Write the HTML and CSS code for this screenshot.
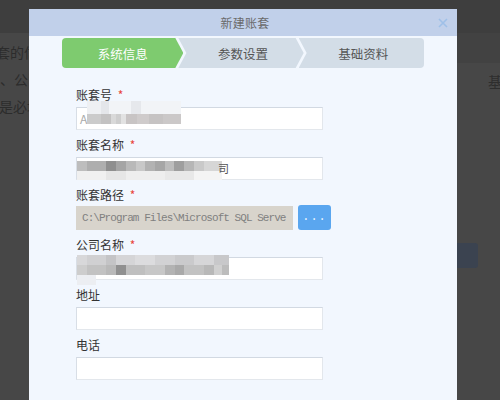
FILE: index.html
```html
<!DOCTYPE html>
<html>
<head>
<meta charset="utf-8">
<link rel="stylesheet" href="styles.css">
</head>
<body>
<div class="page">
  <div class="topbar"></div>
  <div class="main">
    <div class="left-text">
      <p class="l1">套的信息</p>
      <p class="l2">、公司</p>
      <p class="l3">是必填</p>
    </div>
    <div class="spacer"></div>
    <div class="right-col">
      <div class="band"></div>
      <div class="row-text">基础</div>
      <div class="bg-btn"></div>
    </div>
  </div>
</div>

<div class="dialog">
  <div class="dialog-header">
    <span></span>
    <span class="title">新建账套</span>
    <span class="close"><svg width="10" height="10" viewBox="0 0 10 10"><path d="M1 1 L9 9 M9 1 L1 9" stroke="#9fc0e8" stroke-width="1.6" fill="none"/></svg></span>
  </div>
  <div class="steps">
    <div class="step step-first active">系统信息</div>
    <div class="step step-mid">参数设置</div>
    <div class="step step-last">基础资料</div>
  </div>
  <div class="form">
    <div class="field">
      <div class="label">账套号 <span class="req">*</span></div>
      <div class="input"><span class="val">AI</span><span class="mosaic mosaic-a"></span></div>
    </div>
    <div class="field">
      <div class="label">账套名称 <span class="req">*</span></div>
      <div class="input"><span class="mosaic mosaic-b"></span><span class="tail">司</span></div>
    </div>
    <div class="field field-path">
      <div class="label">账套路径 <span class="req">*</span></div>
      <div class="path-row">
        <div class="input input-path">C:\Program Files\Microsoft SQL Serve</div>
        <button class="browse">...</button>
      </div>
    </div>
    <div class="field">
      <div class="label">公司名称 <span class="req">*</span></div>
      <div class="input"><span class="mosaic mosaic-c"></span></div>
    </div>
    <div class="field">
      <div class="label">地址</div>
      <div class="input"></div>
    </div>
    <div class="field">
      <div class="label">电话</div>
      <div class="input"></div>
    </div>
  </div>
</div>
</body>
</html>
```

FILE: styles.css
```css
* { box-sizing: border-box; }
html, body {
  margin: 0;
  padding: 0;
}
body {
  width: 500px;
  height: 400px;
  overflow: hidden;
  background: #474747;
  font-family: "Noto Sans CJK SC", "Noto Sans", sans-serif;
  position: relative;
}

/* background page (dimmed) */
.page {
  width: 500px;
  height: 400px;
  display: flex;
  flex-direction: column;
}
.topbar {
  height: 33px;
  background: #3e3e3e;
  flex: none;
}
.main {
  flex: 1;
  display: flex;
}
.left-text {
  width: 29px;
  overflow: hidden;
  padding-top: 6px;
  color: #2c2c2c;
  font-size: 14px;
  line-height: 27px;
  white-space: nowrap;
}
.left-text p { margin: 0; }
.left-text .l1 { margin-left: -4px; }
.left-text .l2 { margin-left: 0; }
.left-text .l3 { margin-left: -1px; }
.spacer { flex: 1; }
.right-col {
  width: 43px;
  display: flex;
  flex-direction: column;
}
.band {
  height: 30px;
  background: #424242;
}
.row-text {
  margin-top: 9px;
  padding-left: 31px;
  font-size: 14px;
  line-height: 18px;
  color: #2e2e2e;
  white-space: nowrap;
  overflow: hidden;
}
.bg-btn {
  margin-top: 153px;
  width: 21px;
  height: 25px;
  background: #3b4350;
  border-radius: 0 3px 3px 0;
}

/* dialog */
.dialog {
  position: absolute;
  left: 29px;
  top: 9px;
  width: 428px;
  height: 400px;
  background: #f2f7fe;
}
.dialog-header {
  height: 27px;
  background: #c1d0ea;
  display: grid;
  grid-template-columns: 1fr auto 1fr;
  align-items: center;
  color: #6a6a6a;
  font-size: 12px;
}
.title { padding-left: 4px; letter-spacing: 0.3px; }
.close {
  justify-self: end;
  padding-right: 9px;
  display: flex;
  align-items: center;
}

.steps {
  margin: 2px 33px 0 33px;
  height: 30px;
  display: flex;
}
.step {
  flex: 1;
  display: flex;
  align-items: center;
  justify-content: center;
  font-size: 12.5px;
  color: #555;
  background: #d3dde7;
}
.step-first {
  border-radius: 4px 0 0 4px;
  clip-path: polygon(0 0, calc(100% - 8px) 0, 100% 50%, calc(100% - 8px) 100%, 0 100%);
}
.step-mid {
  margin-left: -5px;
  padding-left: 4px;
  clip-path: polygon(0 0, calc(100% - 8px) 0, 100% 50%, calc(100% - 8px) 100%, 0 100%, 8px 50%);
}
.step-last {
  margin-left: -5px;
  padding-left: 4px;
  border-radius: 0 4px 4px 0;
  clip-path: polygon(0 0, 100% 0, 100% 100%, 0 100%, 8px 50%);
}
.step.active {
  background: #7ecb6f;
  color: #fff;
}

.form {
  padding: 19px 0 0 47px;
  display: flex;
  flex-direction: column;
  gap: 7px;
}
.field {
  display: flex;
  flex-direction: column;
  gap: 4px;
}
.field-path { gap: 2px; }
.label {
  font-size: 12px;
  line-height: 16px;
  color: #333;
}
.req {
  color: #e8443a;
  margin-left: 3px;
}
.input {
  position: relative;
  width: 247px;
  height: 23px;
  background: #fff;
  border: 1px solid #e3e7ec;
  border-top-color: #d2d9e2;
  border-left-color: #d8dee6;
  font-size: 12px;
  display: flex;
  align-items: center;
}
.val {
  padding-left: 3px;
  color: #aaa;
}
.tail {
  position: absolute;
  left: 141px;
  top: 2px;
  color: #555;
  font-size: 11px;
}
.path-row {
  display: flex;
  gap: 5px;
  align-items: center;
  height: 25px;
}
.input-path {
  width: 217px;
  height: 24px;
  background: #d8d4cc;
  border: none;
  padding-left: 6px;
  color: #808080;
  font-family: "Liberation Mono", monospace;
  font-size: 11px;
  letter-spacing: -0.95px;
  white-space: nowrap;
  overflow: hidden;
}
.browse {
  width: 33px;
  height: 25px;
  border: none;
  border-radius: 3px;
  background: #5aa6ef;
  color: #e8f2fd;
  font-size: 12px;
  letter-spacing: 1px;
  padding: 0 0 2px 0;
  font-family: "Liberation Mono", monospace;
}

/* pixelated (blurred) content */
.mosaic {
  position: absolute;
  display: block;
}
.mosaic-a {
  left: 10px;
  top: -7px;
  width: 94px;
  height: 23px;
  background:
    linear-gradient(to right, #cbcbcb 0 14px, #c3c2c2 14px 24px, #d9d9d9 24px 29px, #cecece 29px 34px, #e2e2e2 34px 39px, #c8c4c4 39px 50px, #cfcbcb 50px 62px, #c6c3c3 62px 76px, #cbc8c8 76px 94px) 0 13px / 94px 10px no-repeat,
    linear-gradient(to right, #eef0f3 0 14px, #e4e6ea 14px 22px, #f2f4f7 22px 44px, #e6e8ec 44px 54px, #f2f4f7 54px 94px) 0 0 / 94px 13px no-repeat;
}
.mosaic-b {
  left: 0;
  top: 3px;
  width: 145px;
  height: 19px;
  background:
    linear-gradient(to right, #bdbdbd 0 10px, #aeaeae 10px 29px, #8f8f8f 29px 39px, #a5a5a5 39px 49px, #b9b9b9 49px 59px, #c8c8c8 59px 68px, #b2b2b2 68px 78px, #a6a6a6 78px 88px, #bcbcbc 88px 97px, #9e9e9e 97px 107px, #b6b6b6 107px 117px, #c9c9c9 117px 127px, #d6d6d6 127px 145px) 0 0 / 145px 10px no-repeat,
    linear-gradient(to right, #f0f0f0 0 29px, #e6e6e6 29px 49px, #eeeeee 49px 88px, #e8e8e8 88px 117px, #f4f4f4 117px 145px) 0 10px / 145px 9px no-repeat;
}
.mosaic-c {
  left: 0;
  top: -3px;
  width: 152px;
  height: 30px;
  background:
    linear-gradient(to right, #d8d8da 0 10px, #d0d0d2 10px 29px, #c4c4c6 29px 39px, #d5d5d7 39px 58px, #dcdcde 58px 78px, #d2d2d4 78px 98px, #cacacc 98px 117px, #d6d6d8 117px 137px, #c8c8ca 137px 152px) 0 0 / 152px 10px no-repeat,
    linear-gradient(to right, #cdcdcd 0 10px, #c2c2c2 10px 29px, #b9b9b9 29px 39px, #909090 39px 49px, #bfbfbf 49px 68px, #c7c7c7 68px 88px, #b3b3b3 88px 98px, #a9a9a9 98px 107px, #c2c2c2 107px 127px, #b8b8b8 127px 137px, #d0d0d0 137px 145px, #bcbcbc 145px 152px) 0 10px / 152px 10px no-repeat,
    linear-gradient(to right, #eceef2 0 19px, transparent 19px) 0 20px / 152px 10px no-repeat;
}
```
